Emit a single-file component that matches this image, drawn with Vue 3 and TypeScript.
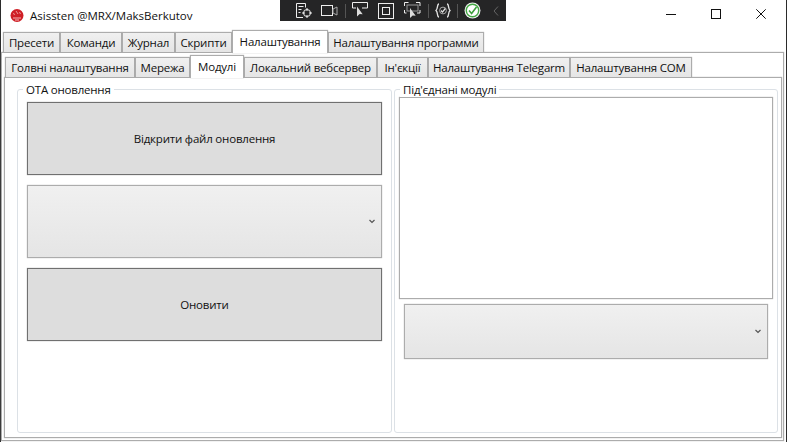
<script setup lang="ts">
interface Tab { label: string; width: number; active?: boolean }
const mainTabs: Tab[] = [
  { label: 'Пресети', width: 57 },
  { label: 'Команди', width: 62 },
  { label: 'Журнал', width: 53 },
  { label: 'Скрипти', width: 57 },
  { label: 'Налаштування', width: 96, active: true },
  { label: 'Налаштування программи', width: 156 },
]
const subTabs: Tab[] = [
  { label: 'Голвні налаштування', width: 130 },
  { label: 'Мережа', width: 55 },
  { label: 'Модулі', width: 54, active: true },
  { label: 'Локальний вебсервер', width: 133 },
  { label: "Ін'єкції", width: 51 },
  { label: 'Налаштування Telegarm', width: 142 },
  { label: 'Налаштування COM', width: 122 },
]
</script>

<template>
  <div class="window">
    <header class="titlebar">
      <svg class="logo" width="14" height="13" viewBox="0 0 14 13">
        <circle cx="7" cy="6.5" r="6.5" fill="#cf1f26" />
        <path d="M3 9h8M5 11h4" stroke="#f3b5b5" stroke-width="1" fill="none" />
        <path d="M6 2l2 3M9.5 3l1 2M3.5 4l1 2" stroke="#ee9a9a" stroke-width="1" fill="none" />
      </svg>
      <span class="title">Asissten @MRX/MaksBerkutov</span>
      <div class="controls">
        <svg width="10" height="10" viewBox="0 0 10 10"><path d="M0 5.5h10" stroke="#111" /></svg>
        <svg width="10" height="10" viewBox="0 0 10 10"><rect x=".5" y=".5" width="9" height="9" fill="none" stroke="#111" /></svg>
        <svg width="10" height="10" viewBox="0 0 10 10"><path d="M.3.3l9.4 9.4M9.7.3L.3 9.7" stroke="#111" /></svg>
      </div>
    </header>

    <div class="toolbar">
      <span class="grip"></span>
      <svg class="t1" width="18" height="18" viewBox="0 0 18 18" fill="none" stroke="#eee">
        <path d="M8 15.5H1.5v-14h9v4M3.5 4.5h5M3.5 7.5h3M3.5 10.5h2" />
        <circle cx="12" cy="11" r="3.5" />
        <path d="M12 6v3M12 13v3M7 11h3M14 11h3" />
      </svg>
      <svg class="t2" width="17" height="12" viewBox="0 0 17 12" fill="none" stroke="#eee">
        <rect x=".5" y=".5" width="11" height="10" />
        <path d="M12 4l4-2v8l-4-2z" stroke="#aaa" />
      </svg>
      <span class="sep s1"></span>
      <svg class="t3" width="17" height="17" viewBox="0 0 17 17" fill="none">
        <path d="M.5 6V.5h15V6h-5.5M.5 6H4" stroke="#eee" />
        <path d="M5 4.5v10l2.7-2.4 3 .1z" fill="#ddd" />
      </svg>
      <svg class="t4" width="16" height="16" viewBox="0 0 16 16" fill="none" stroke="#eee">
        <rect x=".5" y=".5" width="15" height="15" />
        <rect x="4.5" y="4.5" width="7" height="7" />
      </svg>
      <svg class="t5" width="17" height="17" viewBox="0 0 17 17" fill="none">
        <path d="M.5 4V.5h4M12 .5h4V4M.5 8v3h2M16 8v3h-3" stroke="#eee" />
        <rect x="3" y="3" width="11" height="6" stroke="#999" />
        <path d="M6 6v10l2.7-2.4 3 .1z" fill="#ddd" />
      </svg>
      <span class="sep s2"></span>
      <svg class="t6" width="16" height="15" viewBox="0 0 16 15" fill="none" stroke="#e4e4e4" stroke-width="1.3">
        <path d="M4 1C1.8 1 3.2 5.5 1 7.5c2.2 2 .8 6.500 3 6.500M12 1c2.200 0 .8 4.500 3 6.500-2.200 2-.8 6.500-3 6.500" />
        <circle cx="8" cy="7.500" r="3.400" stroke="#aaa" stroke-width="1" />
        <path d="M6 7.500l1.500 1.600 2.800-3.600" />
      </svg>
      <span class="sep s3"></span>
      <svg class="t7" width="17" height="17" viewBox="0 0 17 17" fill="none">
        <circle cx="8.500" cy="8.500" r="8" fill="#f2f2f2" />
        <circle cx="8.500" cy="8.500" r="6.200" fill="#fff" stroke="#45a845" stroke-width="1.400" />
        <path d="M5 8.500l2.600 3L12.500 5" stroke="#3c9f3c" stroke-width="1.600" />
      </svg>
      <svg class="t8" width="6" height="10" viewBox="0 0 6 10" fill="none">
        <path d="M5 .5L1 5l4 4.500" stroke="#666" />
      </svg>
    </div>

    <nav class="tabs tabs-main">
      <div
        v-for="tab in mainTabs"
        :key="tab.label"
        class="tab"
        :class="{ active: tab.active }"
        :style="{ width: tab.width + 'px' }"
      >{{ tab.label }}</div>
    </nav>

    <section class="pane-outer">
      <nav class="tabs tabs-sub">
        <div
          v-for="tab in subTabs"
          :key="tab.label"
          class="tab"
          :class="{ active: tab.active }"
          :style="{ width: tab.width + 'px' }"
        >{{ tab.label }}</div>
      </nav>

      <div class="pane-inner">
        <div class="group group-ota">
          <span class="legend">ОТА оновлення</span>
          <button class="btn">Відкрити файл оновлення</button>
          <div class="combo">
            <svg width="6" height="5" viewBox="0 0 6 5" fill="none"><path d="M.5 1L3 3.500 5.500 1" stroke="#555" stroke-width="1.200" /></svg>
          </div>
          <button class="btn">Оновити</button>
        </div>
        <div class="group group-modules">
          <span class="legend">Під'єднані модулі</span>
          <div class="list"></div>
          <div class="combo combo-modules">
            <svg width="6" height="5" viewBox="0 0 6 5" fill="none"><path d="M.5 1L3 3.500 5.500 1" stroke="#555" stroke-width="1.200" /></svg>
          </div>
        </div>
      </div>
    </section>
  </div>
</template>

<style>
html, body { margin: 0; overflow: hidden; }
</style>

<style scoped>
.window {
  position: relative;
  width: 787px;
  height: 442px;
  box-sizing: border-box;
  display: flex;
  flex-direction: column;
  background: #fff;
  border-left: 1px solid #2b2b2b;
  border-right: 1px solid #2b2b2b;
  padding-bottom: 1px;
  font-family: "Open Sans", "Noto Sans", sans-serif;
  font-size: 11.5px;
  letter-spacing: -0.2px;
  color: #111;
}
.titlebar {
  height: 30px;
  flex: none;
  display: flex;
  align-items: center;
  padding-left: 9px;
}
.logo { margin-right: 6px; margin-top: 1px; }
.title { font-size: 11.5px; letter-spacing: 0; }
.controls {
  margin-left: auto;
  margin-right: 20px;
  display: flex;
  gap: 35px;
  margin-top: -2px;
}
.toolbar {
  position: absolute;
  left: 279px;
  top: 0;
  width: 226px;
  height: 21px;
  background: #252526;
  display: flex;
  align-items: center;
}
.toolbar svg { flex: none; }
.grip {
  width: 4px;
  height: 17px;
  flex: none;
  margin-left: 3px;
  background-image: radial-gradient(#777 35%, transparent 40%);
  background-size: 2px 2px;
}
.t1 { margin-left: 8px; }
.t2 { margin-left: 8px; }
.sep { width: 1px; height: 14px; background: #555; flex: none; }
.s1 { margin-left: 7px; }
.t3 { margin-left: 6px; margin-bottom: 1px; }
.t4 { margin-left: 9px; }
.t5 { margin-left: 10px; margin-bottom: 1px; }
.s2 { margin-left: 7px; }
.t6 { margin-left: 6px; }
.s3 { margin-left: 6px; }
.t7 { margin-left: 6px; }
.t8 { margin-left: 12px; }

.tabs { display: flex; align-items: flex-end; flex: none; position: relative; z-index: 2; height: 22px; }
.tabs-main { padding-left: 2px; }
.tabs-sub { margin-left: 1px; }
.tab {
  height: 20px;
  box-sizing: border-box;
  flex: none;
  border: 1px solid #acacac;
  border-bottom: none;
  box-shadow: 0 0 1px rgba(160, 160, 160, 0.8);
  background: linear-gradient(#f0f0f0, #e5e5e5);
  display: flex;
  align-items: center;
  justify-content: center;
  white-space: nowrap;
}
.tab.active {
  height: 23px;
  background: #fff;
  margin-bottom: -1px;
  padding-bottom: 2px;
  position: relative;
  z-index: 1;
}
.pane-outer {
  flex: 1;
  min-height: 0;
  width: 783px;
  box-sizing: border-box;
  border: 1px solid #acacac;
  box-shadow: 0 0 1px rgba(160, 160, 160, 0.8);
  padding: 2px 1px 2px 2px;
  display: flex;
  flex-direction: column;
}
.pane-inner {
  flex: 1;
  min-height: 0;
  box-sizing: border-box;
  border: 1px solid #acacac;
  box-shadow: 0 0 1px rgba(160, 160, 160, 0.8);
  padding: 11px 3px 4px 12px;
  display: grid;
  grid-template-columns: 375px 384px;
  column-gap: 2px;
}
.group {
  position: relative;
  box-sizing: border-box;
  border: 1px solid #dce1e6;
  border-radius: 3px;
  display: flex;
  flex-direction: column;
}
.group-ota { padding: 12px 9px 0; gap: 10px; }
.group-modules { padding: 7px 4px 0; gap: 5px; }
.legend {
  position: absolute;
  top: -8px;
  left: 5px;
  padding: 0 3px;
  background: #fff;
  line-height: 15px;
}
.btn {
  height: 73px;
  flex: none;
  margin: 0;
  padding: 0;
  border: 1px solid #707070;
  box-shadow: 0 0 1px rgba(110, 110, 110, 0.7);
  background: #dddddd;
  font: inherit;
  letter-spacing: inherit;
  color: inherit;
}
.combo {
  height: 73px;
  flex: none;
  box-sizing: border-box;
  border: 1px solid #acacac;
  box-shadow: 0 0 1px rgba(160, 160, 160, 0.8);
  background: linear-gradient(#f0f0f0, #e5e5e5);
  display: flex;
  align-items: center;
  justify-content: flex-end;
  padding-right: 6px;
}
.combo-modules { height: 55px; margin: 0 5px; }
.list {
  height: 202px;
  flex: none;
  box-sizing: border-box;
  border: 1px solid #acacac;
  box-shadow: 0 0 1px rgba(160, 160, 160, 0.8);
  background: #fff;
}
</style>
